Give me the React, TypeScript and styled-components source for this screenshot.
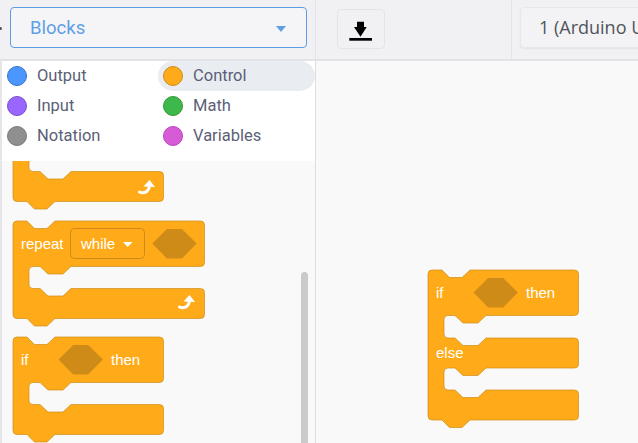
import React from 'react'
import styled, { createGlobalStyle } from 'styled-components'

const GlobalStyle = createGlobalStyle`
  html, body {
    margin: 0;
    padding: 0;
    width: 638px;
    height: 443px;
    overflow: hidden;
    background: #f9f9f9;
  }
`

const Page = styled.div`
  width: 638px;
  height: 443px;
  display: flex;
  flex-direction: column;
  overflow: hidden;
  font-family: Roboto, 'Liberation Sans', sans-serif;
`

const Toolbar = styled.header`
  position: relative;
  display: flex;
  height: 61px;
  flex: none;
  background: #f1f1f4;
  border-bottom: 2px solid #e3e3e6;
  box-sizing: border-box;
`

const HandleDot = styled.span`
  position: absolute;
  top: 27px;
  left: -1px;
  width: 3px;
  height: 3px;
  border-radius: 50%;
  background: #555;
`

const ToolbarCell = styled.div<{ $width?: number }>`
  display: flex;
  align-items: flex-start;
  box-sizing: border-box;
  flex: ${(p) => (p.$width ? `0 0 ${p.$width}px` : '1')};
  height: 59px;
  padding-top: 7px;
  border-right: 1px solid #e4e4e8;
  overflow: hidden;
  &:last-child {
    border-right: none;
  }
`

const BlockSelect = styled.div`
  display: flex;
  align-items: center;
  justify-content: space-between;
  box-sizing: border-box;
  width: 297px;
  height: 41px;
  margin-left: 10px;
  padding: 0 20px 0 19px;
  background: #f5f5f7;
  border: 1px solid #5c9ce6;
  border-radius: 4px;
  color: #5e9fe6;
  font-size: 18.5px;
`

const Caret = styled.span`
  width: 0;
  height: 0;
  margin-top: 2px;
  border-left: 5px solid transparent;
  border-right: 5px solid transparent;
  border-top: 6px solid #5e9fe6;
`

const IconButton = styled.button`
  display: flex;
  align-items: center;
  justify-content: center;
  box-sizing: border-box;
  width: 48px;
  height: 40px;
  margin: 2px 0 0 21px;
  padding: 0;
  background: #f1f1f4;
  border: 1px solid #e4e4e8;
  border-radius: 4px;
`

const BoardSelect = styled.div`
  box-sizing: border-box;
  width: 200px;
  height: 41px;
  margin-left: 8px;
  padding-left: 18px;
  background: #f3f3f5;
  border: 1px solid #e8e8ec;
  border-radius: 4px;
  box-shadow: 0 1px 2px rgba(0, 0, 0, 0.06);
  color: #50535a;
  font-family: 'Open Sans', sans-serif;
  font-size: 18px;
  line-height: 39px;
  white-space: nowrap;
`

const Body = styled.main`
  flex: 1;
  display: flex;
  min-height: 0;
`

const Sidebar = styled.aside`
  flex: 0 0 316px;
  display: flex;
  flex-direction: column;
  box-sizing: border-box;
  border-left: 2px solid #e6e6ea;
  border-right: 1px solid #dedee2;
  min-height: 0;
`

const CategoryMenu = styled.nav`
  flex: none;
  display: grid;
  grid-template-columns: 156px 157px;
  grid-auto-rows: 30px;
  padding-bottom: 10px;
  background: #fff;
`

const Category = styled.div<{ $active?: boolean }>`
  display: flex;
  align-items: center;
  gap: 10px;
  padding-left: 5px;
  border-radius: 15px;
  background: ${(p) => (p.$active ? '#e9edf1' : 'transparent')};
  color: #5b5f77;
  font-size: 16.5px;
`

const CategoryName = styled.span`
  margin: -2px 0 0 0;
`

const Swatch = styled.span<{ $fill: string; $edge: string }>`
  box-sizing: border-box;
  width: 20px;
  height: 20px;
  border-radius: 50%;
  background: ${(p) => p.$fill};
  border: 1px solid ${(p) => p.$edge};
`

const Flyout = styled.section`
  position: relative;
  flex: 1;
  min-height: 0;
  overflow: hidden;
  background: #f9f9f9;
`

const FlyoutList = styled.div`
  display: flex;
  flex-direction: column;
  gap: 11px;
  margin: -57px 0 0 11px;
`

const ScrollThumb = styled.div`
  position: absolute;
  top: 111px;
  right: 7px;
  width: 7px;
  height: 200px;
  background: #cacaca;
  border-radius: 4px 4px 0 0;
`

const Workspace = styled.section`
  position: relative;
  flex: 1;
  overflow: hidden;
  background: #f9f9f9;
`

const BlockSvg = styled.svg`
  display: block;
  overflow: visible;
  flex: none;
`

const PlacedBlock = styled.div`
  position: absolute;
  top: 208.5px;
  left: 112px;
`

const BlockShape = styled.path`
  fill: #ffab19;
  stroke: #cf8b17;
  stroke-opacity: 0.7;
  stroke-width: 1;
`

const BlockLabel = styled.text`
  fill: #fff;
  font-family: 'Liberation Sans', Arial, sans-serif;
  font-size: 15px;
`

const Hexagon = styled.path`
  fill: #cf8b17;
`

const DropdownBox = styled.rect`
  fill: #ffab19;
  stroke: #cf8b17;
`

type Arm = [number, number]

const blockPath = (w: number, arms: Arm[], bottom: number) => {
  const start = `M0 4Q0 0 4 0H14L21.5 7.5H34L42 0H${w - 4}Q${w} 0 ${w} 4`
  const middle = arms
    .map(
      ([a, b]) =>
        `V${a - 4}Q${w} ${a} ${w - 4} ${a}H58L50 ${a + 7.5}H35L27 ${a}H20Q16 ${a} 16 ${a + 4}` +
        `V${b - 4}Q16 ${b} 20 ${b}H27L35 ${b + 7.5}H50L58 ${b}H${w - 4}Q${w} ${b} ${w} ${b + 4}`
    )
    .join('')
  const end = `V${bottom - 4}Q${w} ${bottom} ${w - 4} ${bottom}H42L34 ${bottom + 7.5}H21.5L14 ${bottom}H4Q0 ${bottom} 0 ${bottom - 4}Z`
  return start + middle + end
}

const hexagon = (x: number) =>
  `M${x} 22.5L${x + 14.7} 8H${x + 29.7}L${x + 44.4} 22.5L${x + 29.7} 37.5H${x + 14.7}Z`

const RepeatArrow = ({ x, y }: { x: number; y: number }) => (
  <g transform={`translate(${x} ${y})`}>
    <path d="M1.5 11C6 13 11 11 11.5 4" fill="none" stroke="#fff" strokeWidth="3" strokeLinecap="round" />
    <path d="M5.5 5.5L11.5 -1L17 6Z" fill="#fff" />
  </g>
)

const Block = ({ width, arms, bottom, children }: { width: number; arms: Arm[]; bottom: number; children?: React.ReactNode }) => (
  <BlockSvg width={width} height={bottom + 8} viewBox={`0 0 ${width} ${bottom + 8}`}>
    <BlockShape d={blockPath(width, arms, bottom)} />
    {children}
  </BlockSvg>
)

const DownloadIcon = () => (
  <svg width="24" height="24" viewBox="0 0 24 24">
    <path d="M8 4.7H15V10H17.7L11.5 19.7L5 10H8Z" fill="#000" />
    <rect x="0.3" y="21" width="22.7" height="2.7" fill="#000" />
  </svg>
)

const categories = [
  { name: 'Output', fill: '#4c97ff', edge: '#3373cc' },
  { name: 'Control', fill: '#ffab19', edge: '#cf8b17', active: true },
  { name: 'Input', fill: '#9966ff', edge: '#774dcb' },
  { name: 'Math', fill: '#3cb94a', edge: '#389438' },
  { name: 'Notation', fill: '#8f8f8f', edge: '#7a7a7a' },
  { name: 'Variables', fill: '#d65cd6', edge: '#bd42bd' },
]

const App = () => {
  return (
    <Page>
      <GlobalStyle />
      <Toolbar>
        <HandleDot />
        <ToolbarCell $width={316}>
          <BlockSelect>
            Blocks
            <Caret />
          </BlockSelect>
        </ToolbarCell>
        <ToolbarCell $width={196}>
          <IconButton type="button" aria-label="Download">
            <DownloadIcon />
          </IconButton>
        </ToolbarCell>
        <ToolbarCell>
          <BoardSelect>1 (Arduino Uno)</BoardSelect>
        </ToolbarCell>
      </Toolbar>
      <Body>
        <Sidebar>
          <CategoryMenu>
            {categories.map((c) => (
              <Category key={c.name} $active={c.active}>
                <Swatch $fill={c.fill} $edge={c.edge} />
                <CategoryName>{c.name}</CategoryName>
              </Category>
            ))}
          </CategoryMenu>
          <Flyout>
            <FlyoutList>
              <Block width={150.5} arms={[[45.5, 67.5]]} bottom={97.5}>
                <RepeatArrow x={125} y={77} />
              </Block>
              <Block width={191.5} arms={[[45.5, 67.5]]} bottom={97.5}>
                <BlockLabel x={8} y={28}>repeat</BlockLabel>
                <DropdownBox x={57.5} y={7.5} width={74} height={30} rx={4} />
                <BlockLabel x={68} y={28}>while</BlockLabel>
                <path d="M110 21H119.5L114.75 26Z" fill="#fff" />
                <Hexagon d={hexagon(139.3)} />
                <RepeatArrow x={165} y={75} />
              </Block>
              <Block width={150.5} arms={[[45.5, 67.5]]} bottom={97.5}>
                <BlockLabel x={8} y={28}>if</BlockLabel>
                <Hexagon d={hexagon(45.5)} />
                <BlockLabel x={98} y={28}>then</BlockLabel>
              </Block>
            </FlyoutList>
            <ScrollThumb />
          </Flyout>
        </Sidebar>
        <Workspace>
          <PlacedBlock>
            <Block width={150.5} arms={[[45.5, 68], [98, 120]]} bottom={150}>
              <BlockLabel x={8} y={28}>if</BlockLabel>
              <Hexagon d={hexagon(45.5)} />
              <BlockLabel x={98} y={28}>then</BlockLabel>
              <BlockLabel x={8} y={88}>else</BlockLabel>
            </Block>
          </PlacedBlock>
        </Workspace>
      </Body>
    </Page>
  )
}

export default App
